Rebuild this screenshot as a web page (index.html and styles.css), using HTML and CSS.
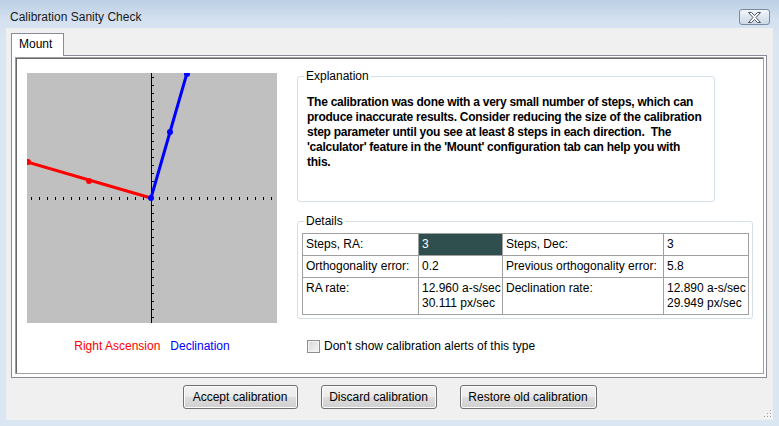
FILE: index.html
```html
<!DOCTYPE html>
<html>
<head>
<meta charset="utf-8">
<link rel="stylesheet" href="styles.css">
</head>
<body>
<div class="window">
  <div class="titlebar">
    <span class="title">Calibration Sanity Check</span>
    <div class="close">
      <svg width="13" height="11" viewBox="0 0 13 11"><polygon points="0.5,0.5 3.5,0.5 6.5,3.5 9.5,0.5 12.5,0.5 8,5.5 12.5,10.5 9.5,10.5 6.5,7.5 3.5,10.5 0.5,10.5 5,5.5" fill="#fff" stroke="#4b566b" stroke-width="1" stroke-linejoin="round"/></svg>
    </div>
  </div>
  <div class="client">
    <div class="notebook">
      <div class="tabs"><div class="tab">Mount</div></div>
      <div class="page">
        <div class="panel">
          <div class="left">
            <svg class="plot" width="250" height="250" viewBox="0 0 250 250">
              <defs>
                <pattern id="ht" x="0" y="124" width="8" height="3" patternUnits="userSpaceOnUse"><rect x="4" y="0" width="1" height="3" fill="#000"/></pattern>
                <pattern id="vt" x="125" y="0" width="2" height="8" patternUnits="userSpaceOnUse"><rect x="0" y="4" width="2" height="1" fill="#000"/></pattern>
              </defs>
              <rect width="250" height="250" fill="#c0c0c0"/>
              <rect x="0" y="124" width="250" height="3" fill="url(#ht)" shape-rendering="crispEdges"/>
              <rect x="124" y="0" width="1" height="250" fill="#000" shape-rendering="crispEdges"/>
              <rect x="125" y="0" width="2" height="250" fill="url(#vt)" shape-rendering="crispEdges"/>
              <polyline points="0,89 62,107 124,125" fill="none" stroke="#f00" stroke-width="3"/>
              <circle cx="1" cy="89" r="3" fill="#f00"/>
              <circle cx="62" cy="108" r="3" fill="#f00"/>
              <polyline points="124,125 143,59 160,0" fill="none" stroke="#00f" stroke-width="3"/>
              <circle cx="124" cy="125" r="3" fill="#00f"/>
              <circle cx="143" cy="59" r="3" fill="#00f"/>
              <circle cx="160" cy="1" r="3" fill="#00f"/>
            </svg>
            <div class="legend"><span class="ra">Right Ascension</span><span class="dec">Declination</span></div>
          </div>
          <div class="right">
            <fieldset class="group explanation">
              <legend>Explanation</legend>
              <p>The calibration was done with a very small number of steps, which can<br>produce inaccurate results. Consider reducing the size of the calibration<br>step parameter until you see at least 8 steps in each direction.&nbsp; The<br>'calculator' feature in the 'Mount' configuration tab can help you with<br>this.</p>
            </fieldset>
            <fieldset class="group details">
              <legend>Details</legend>
              <table>
                <colgroup><col class="c1"><col class="c2"><col class="c3"><col class="c4"></colgroup>
                <tr><td>Steps, RA:</td><td class="hl">3</td><td>Steps, Dec:</td><td>3</td></tr>
                <tr><td>Orthogonality error:</td><td>0.2</td><td>Previous orthogonality error:</td><td>5.8</td></tr>
                <tr><td>RA rate:</td><td>12.960 a-s/sec<br>30.111 px/sec</td><td>Declination rate:</td><td>12.890 a-s/sec<br>29.949 px/sec</td></tr>
              </table>
            </fieldset>
            <label class="check"><span class="box"></span><span>Don't show calibration alerts of this type</span></label>
          </div>
        </div>
      </div>
    </div>
    <div class="buttons">
      <button class="btn b1">Accept calibration</button>
      <button class="btn b2">Discard calibration</button>
      <button class="btn b3">Restore old calibration</button>
    </div>
    <svg class="grip" width="8" height="8" viewBox="0 0 8 8">
      <g fill="#a0a0a0">
        <rect x="6" y="0" width="1" height="1"/>
        <rect x="3" y="3" width="1" height="1"/><rect x="6" y="3" width="1" height="1"/>
        <rect x="0" y="6" width="1" height="1"/><rect x="3" y="6" width="1" height="1"/><rect x="6" y="6" width="1" height="1"/>
      </g>
      <g fill="#fff">
        <rect x="7" y="1" width="1" height="1"/>
        <rect x="4" y="4" width="1" height="1"/><rect x="7" y="4" width="1" height="1"/>
        <rect x="1" y="7" width="1" height="1"/><rect x="4" y="7" width="1" height="1"/><rect x="7" y="7" width="1" height="1"/>
      </g>
    </svg>
  </div>
</div>
</body>
</html>
```
FILE: styles.css
```css
html, body {
  margin: 0;
  padding: 0;
  width: 779px;
  height: 426px;
  overflow: hidden;
}
body {
  font-family: "Liberation Sans", Arial, sans-serif;
  font-size: 12px;
  line-height: 15px;
  color: #000;
}
.window {
  width: 779px;
  height: 426px;
  box-sizing: border-box;
  padding: 0 6px 6px 6px;
  background: linear-gradient(#bccfe4 0px, #d4e1f0 20px, #dbe6f3 40px, #dbe6f3 100%);
  display: flex;
  flex-direction: column;
}
.titlebar {
  height: 28px;
  flex: none;
  display: flex;
  align-items: flex-start;
  justify-content: space-between;
}
.title {
  margin: 10px 0 0 4px;
  color: #1a1a1a;
}
.close {
  margin: 9px 3px 0 0;
  width: 29px;
  height: 14px;
  border: 1px solid #7b8aa3;
  border-radius: 3px;
  background: linear-gradient(#f4f7fb, #dde6f0 50%, #cfdae7);
  display: flex;
  align-items: center;
  justify-content: center;
}
.close svg { display: block; }
.client {
  flex: 1;
  background: #f0f0f0;
  display: flex;
  flex-direction: column;
  position: relative;
}
.notebook {
  margin: 5px 6px 0 5px;
}
.tabs {
  display: flex;
  height: 22px;
}
.tab {
  position: relative;
  z-index: 1;
  box-sizing: border-box;
  width: 53px;
  height: 23px;
  border: 1px solid #898c95;
  border-bottom: none;
  background: #fff;
  padding: 3px 0 0 7px;
}
.page {
  border: 1px solid #898c95;
  background: #fff;
  height: 317px;
  box-sizing: content-box;
  padding: 1px 2px 3px 3px;
}
.panel {
  box-sizing: border-box;
  height: 317px;
  border: 1px solid #a0a0a0;
  box-shadow: inset 1px 1px 0 #696969;
  display: flex;
  align-items: flex-start;
}
.left {
  margin: 15px 0 0 11px;
  width: 250px;
  flex: none;
}
.plot { display: block; }
.legend {
  margin-top: 16px;
  display: flex;
  justify-content: center;
  gap: 10px;
}
.ra { color: #f00; }
.dec { color: #00f; }
.right {
  margin-left: 20px;
  display: flex;
  flex-direction: column;
  align-items: flex-start;
}
.group {
  margin: 0;
  border: 1px solid #d5dfe5;
  border-radius: 3px;
  min-width: 0;
  box-sizing: border-box;
}
.group legend {
  padding: 0 2px;
  margin-left: 2px;
  line-height: 15px;
}
.explanation {
  width: 418px;
  margin-top: 11px;
  padding: 0 4px;
}
.explanation p {
  margin: 11px 0 31px 5px;
  font-weight: bold;
  letter-spacing: -0.26px;
  white-space: nowrap;
}
.details {
  width: 456px;
  margin-top: 12px;
  padding: 4px 4px 3px 4px;
}
table {
  border-collapse: collapse;
  table-layout: fixed;
  width: 446px;
}
col.c1 { width: 116px; }
col.c2 { width: 84px; }
col.c3 { width: 161px; }
col.c4 { width: 85px; }
td {
  border: 1px solid #a0a0a0;
  padding: 3px 3px 3px 3px;
  vertical-align: top;
  white-space: nowrap;
  overflow: hidden;
}
td.hl {
  background: #2f4f4f;
  color: #fff;
}
.check {
  margin: 20px 0 0 10px;
  display: flex;
  align-items: center;
  gap: 4px;
}
.box {
  width: 11px;
  height: 11px;
  border: 1px solid #8f8f8f;
  background: linear-gradient(135deg, #d8d8d8, #f6f6f6);
  box-shadow: inset 0 0 0 1px #f4f4f4;
}
.buttons {
  margin-top: 7px;
  display: flex;
  justify-content: center;
  gap: 23px;
}
.btn {
  font-family: inherit;
  font-size: 12px;
  color: #000;
  height: 24px;
  border: 1px solid #707070;
  border-radius: 3px;
  background: linear-gradient(#f2f2f2 0%, #ebebeb 50%, #dddddd 51%, #cfcfcf 100%);
  box-shadow: inset 0 0 0 1px #fcfcfc;
  padding: 0;
}
.b1 { width: 115px; }
.b2 { width: 116px; }
.b3 { width: 137px; }
.grip {
  position: absolute;
  right: 1px;
  bottom: 2px;
}
```
